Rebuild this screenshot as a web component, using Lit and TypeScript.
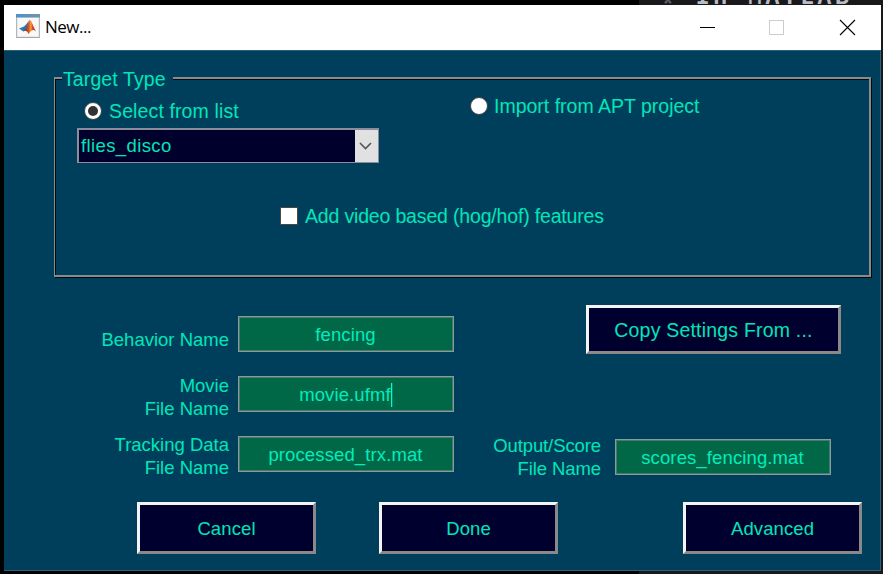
import { LitElement, html, css } from "lit";
import { customElement } from "lit/decorators.js";

@customElement("app-root")
export class AppRoot extends LitElement {
  static styles = css`
    :host { display: block; width: 883px; height: 574px; overflow: hidden; position: relative;
      background: linear-gradient(90deg, #000 639px, #19191b 639px);
      font-family: "Liberation Sans", Arial, sans-serif; color: #00e6b8; box-sizing: border-box; padding: 5px 2px 3px 4px; }
    * { box-sizing: border-box; }
    .backdrop { position: absolute; left: 661px; top: -13px; color: #b9bcc4; font: bold 23px/23px "Liberation Mono", monospace; letter-spacing: 3.6px; white-space: pre; }
    .star { color: #5b5e63; position: relative; top: 9px; }
    .window { position: relative; width: 877px; height: 566px; display: flex; flex-direction: column; background: #003f5c; }
    .bar { height: 45px; flex: none; background: #fff; display: flex; align-items: center; padding-left: 12px; }
    .logo { width: 24px; height: 24px; display: block; margin-top: -3px; }
    .title { color: #000; font: 17px/24px "Open Sans", "Noto Sans", sans-serif; letter-spacing: -0.5px; margin: -1px auto 0 5px; }
    .controls { display: block; width: 160px; height: 20px; margin: -2px 24px 0 0; }
    .body { flex: 1; border: 1px solid #2c607b; border-left: 0; padding: 26px 9px 0 49px; display: flex; flex-direction: column; }
    .panel { position: relative; height: 200px; width: 817px; margin: 0 0 2px 1px; border: 2px solid #858b8f; border-width: 2px 2px 2px 1px; box-shadow: inset 1px 1px #080808, 1px 1px #080808; flex: none; padding: 19px 23px 0; }
    .legend { position: absolute; left: 7px; top: -13px; background: #003f5c; font-size: 19.5px; line-height: 26px; width: 111px; padding-left: 1px; letter-spacing: .1px; white-space: nowrap; }
    .choices { display: flex; height: 30px; }
    .choice { display: flex; align-items: center; font-size: 19.5px; white-space: nowrap; height: 24px; }
    .first { width: 392px; flex: none; margin-top: 1px; padding-left: 6px; gap: 7px; letter-spacing: .12px; }
    .second { margin-top: -4px; gap: 6px; }
    .radio { width: 18px; height: 18px; border-radius: 50%; background: #fff; border: 1px solid #3c4145; display: grid; place-items: center; }
    .dot { width: 10px; height: 10px; border-radius: 50%; background: #333; }
    .select { width: 302px; height: 35px; margin-left: -1px; border: 2px solid #8a8e9c; border-width: 2px 1px 1px 2px; background: #00002c; display: flex; align-items: center; font-size: 18.5px; letter-spacing: .38px; padding-left: 2px; }
    .value { flex: 1; }
    .arrow { width: 23px; height: 32px; background: #e1e1e1; display: grid; place-items: center; }
    .arrow svg { margin-right: 2px; }
    .video { margin: 41px 0 0 202px; gap: 7px; letter-spacing: -.17px; }
    .check { width: 18px; height: 18px; background: #fff; border: 1px solid #4e4740; }
    .form { display: flex; height: 210px; padding-top: 26px; flex: none; }
    .left, .right { display: flex; flex-direction: column; }
    .left { width: 401px; gap: 24px; padding-top: 11px; }
    .row { display: flex; justify-content: flex-end; gap: 9px; height: 36px; flex: none; }
    .label { font-size: 18.5px; line-height: 22.5px; text-align: right; height: 45px; white-space: nowrap; }
    .field { width: 216px; height: 36px; border: 1px solid #8e999c; box-shadow: inset 0 0 0 1px rgba(142,153,156,.45); background: #006747; display: flex; align-items: center; justify-content: center; font-size: 18.5px; letter-spacing: .12px; color: #00edbc; padding: 1px 1px 0 0; }
    .caret { width: 1px; height: 24px; background: #00ffd0; box-shadow: 1px 0 rgba(0,255,208,.25); }
    .right { width: 377px; align-items: flex-end; }
    .button { display: flex; flex: none; align-items: center; justify-content: center; border: 3px solid; border-color: #f4f4f4 #8b8888 #8b8888 #f4f4f4; background: #00002e; width: 179px; height: 52px; font-size: 18.5px; letter-spacing: .1px; padding-top: 1px; }
    .wide { width: 255px; height: 49px; font-size: 19.5px; letter-spacing: .2px; margin-right: -10px; }
    .buttons { display: flex; padding: 13px 0 0 84px; }
    .done { margin: 0 125px 0 63px; }
    .output { margin-top: 85px; gap: 14px; }
    .l1 { padding-top: 13px; } .l2 { margin-top: -1px; } .l3 { margin-top: -2px; } .l4 { margin-top: -4px; letter-spacing: -.1px; }
  `;

  private logo() {
    return html`<svg class="logo" viewBox="0 0 24 24">
      <defs>
        <linearGradient id="top"><stop stop-color="#4d91cc"/><stop offset="1" stop-color="#7293aa"/></linearGradient>
        <linearGradient id="peak"><stop stop-color="#492b35"/><stop offset=".4" stop-color="#d35323"/><stop offset=".6" stop-color="#ff9b37"/><stop offset=".75" stop-color="#cf3d1a"/><stop offset="1" stop-color="#b54228"/></linearGradient>
      </defs>
      <rect x=".5" y=".5" width="23" height="23" fill="#e8e9eb" stroke="#b3b7bb"/>
      <rect x="2" y="4" width="20" height="18" fill="#f8f8f9"/>
      <path d="M.5 23.5H23.5" stroke="#a5a7aa"/>
      <rect width="24" height="3.5" fill="url(#top)"/>
      <path d="M3 14.5 8 12.5 10.5 10 13 6.5 11 14 7.5 17.5Z" fill="#2b76b4"/>
      <path d="M7.5 17.5 10.5 13 13.5 6C15 5 17 12 20 17.5 17.5 14.5 15.5 16 12.5 20 11 17 9.5 16 7.5 17.5Z" fill="url(#peak)"/>
    </svg>`;
  }

  private field(text: string, focused = false) {
    return html`<div class="field"><span>${text}</span>${focused ? html`<span class="caret"></span>` : ""}</div>`;
  }

  render() {
    return html`
      <div class="backdrop"><span class="star">*</span> In MATLAB</div>
      <div class="window">
        <div class="bar">
          ${this.logo()}
          <div class="title">New...</div>
          <svg class="controls" viewBox="0 0 160 20" fill="none" stroke="#000">
            <path d="M3 10.5H18"/>
            <rect x="72.5" y="3.5" width="14" height="14" stroke="#ccc"/>
            <path d="M143 3 158 18M158 3 143 18" stroke-width="1.1"/>
          </svg>
        </div>
        <div class="body">
          <div class="panel">
            <div class="legend">Target Type</div>
            <div class="choices">
              <div class="choice first"><span class="radio"><span class="dot"></span></span>Select from list</div>
              <div class="choice second"><span class="radio"></span>Import from APT project</div>
            </div>
            <div class="select"><span class="value">flies_disco</span>
              <span class="arrow"><svg width="13" height="8" viewBox="0 0 13 8"><path d="M1 1 6.5 6.5 12 1" fill="none" stroke="#555" stroke-width="1.6"/></svg></span>
            </div>
            <div class="choice video"><span class="check"></span>Add video based (hog/hof) features</div>
          </div>
          <div class="form">
            <div class="left">
              <div class="row"><div class="label l1">Behavior Name</div>${this.field("fencing")}</div>
              <div class="row"><div class="label l2">Movie<br>File Name</div>${this.field("movie.ufmf", true)}</div>
              <div class="row"><div class="label l3">Tracking Data<br>File Name</div>${this.field("processed_trx.mat")}</div>
            </div>
            <div class="right">
              <div class="button wide">Copy Settings From ...</div>
              <div class="row output"><div class="label l4">Output/Score<br>File Name</div>${this.field("scores_fencing.mat")}</div>
            </div>
          </div>
          <div class="buttons">
            <div class="button">Cancel</div>
            <div class="button done">Done</div>
            <div class="button">Advanced</div>
          </div>
        </div>
      </div>`;
  }
}
